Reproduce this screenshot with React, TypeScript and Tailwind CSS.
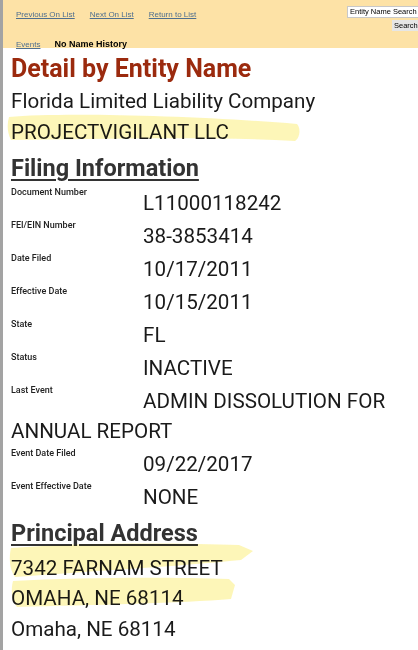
import React from "react";

const rows: { label: string; value: string; more?: string }[] = [
  { label: "Document Number", value: "L11000118242" },
  { label: "FEI/EIN Number", value: "38-3853414" },
  { label: "Date Filed", value: "10/17/2011" },
  { label: "Effective Date", value: "10/15/2011" },
  { label: "State", value: "FL" },
  { label: "Status", value: "INACTIVE" },
  { label: "Last Event", value: "ADMIN DISSOLUTION FOR", more: "ANNUAL REPORT" },
  { label: "Event Date Filed", value: "09/22/2017" },
  { label: "Event Effective Date", value: "NONE" },
];

function Highlight({ d }: { d: string }) {
  return (
    <svg
      className="pointer-events-none absolute left-0 top-0"
      width="418"
      height="650"
      viewBox="0 0 418 650"
    >
      <path d={d} fill="#fcf3a0" opacity="0.75" />
    </svg>
  );
}

export default function App() {
  return (
    <div className="relative h-[650px] w-[418px] overflow-hidden border-l-[3px] border-[#a3a3a3] bg-white font-['Roboto',sans-serif] text-[#1a1a1a]">
      {/* top nav bar */}
      <div className="flex h-[48px] bg-[#fde2a6] pl-[13px] font-['Liberation_Sans',Arial,sans-serif]">
        <div className="flex flex-1 flex-col pt-[9px]">
          <div className="flex gap-[15px] text-[8px] text-[#4f6f8f] underline">
            <span>Previous On List</span>
            <span>Next On List</span>
            <span>Return to List</span>
          </div>
          <div className="mt-[17px] flex items-center gap-[14px]">
            <span className="text-[8px] text-[#4f6f8f] underline">Events</span>
            <span className="text-[9px] font-bold text-black">No Name History</span>
          </div>
        </div>
        <div className="flex flex-col items-end pt-[6px]">
          <div className="h-[12px] w-[71px] overflow-hidden whitespace-nowrap border border-r-0 border-[#c8c8c8] bg-white px-[2px] text-[7.5px] leading-[10px] text-black">
            Entity Name Search
          </div>
          <div className="mt-[2px] h-[11px] w-[26px] whitespace-nowrap bg-[#e6e6e6] pl-[2px] text-[7.5px] leading-[11px] text-black">
            Search
          </div>
        </div>
      </div>

      <div className="relative z-10 px-[8px]">
        <h1 className="mt-[3px] text-[25px] leading-[35px] font-bold text-[#9b2a0e]">Detail by Entity Name</h1>
        <div className="text-[20.6px] leading-[31px]">Florida Limited Liability Company</div>
        <div className="text-[20.6px] leading-[31px]">PROJECTVIGILANT LLC</div>
        <h2 className="mt-[4px] text-[23.5px] leading-[32px] font-bold text-[#333] underline decoration-[2px] underline-offset-[3px]">
          Filing Information
        </h2>

        <div className="mt-[2px]">
          {rows.map((r) => (
            <div key={r.label} className="mb-[3px] text-[20.6px] leading-[30px]">
              <div className="flex">
                <span className="w-[132px] shrink-0 text-[9px] leading-[12px] font-medium text-[#222]">
                  {r.label}
                </span>
                <span className="relative top-[2px] whitespace-nowrap">{r.value}</span>
              </div>
              {r.more && <div className="relative top-[2px]">{r.more}</div>}
            </div>
          ))}
        </div>

        <h2 className="mt-[7px] text-[23.5px] leading-[32px] font-bold text-[#333] underline decoration-[2px] underline-offset-[3px]">
          Principal Address
        </h2>
        <div className="mt-[4px] text-[20.6px] leading-[30px]">7342 FARNAM STREET</div>
        <div className="text-[20.6px] leading-[31px]">OMAHA, NE 68114</div>
        <div className="text-[20.6px] leading-[31px]">Omaha, NE 68114</div>
      </div>

      <div className="pointer-events-none absolute left-0 top-0 z-20 mix-blend-multiply">
        <Highlight d="M6 117 C60 112 200 116 294 124 C298 128 297 138 292 141 C200 136 90 139 8 140 C4 132 4 124 6 117 Z" />
        <Highlight d="M8 548 C80 542 180 543 236 545 L250 551 L238 560 C180 566 90 571 12 577 C6 569 6 556 8 548 Z" />
        <Highlight d="M10 581 C80 577 170 577 226 579 L232 585 L228 599 C180 603 90 605 14 607 C8 599 8 589 10 581 Z" />
      </div>
    </div>
  );
}
